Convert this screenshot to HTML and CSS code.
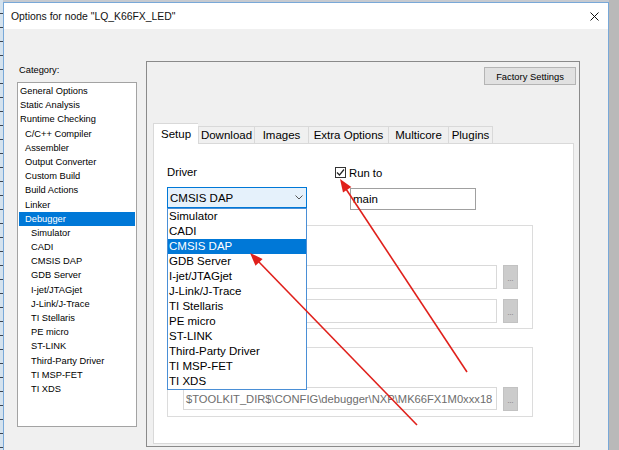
FILE: index.html
```html
<!DOCTYPE html>
<html>
<head>
<meta charset="utf-8">
<title>Options for node</title>
<link rel="stylesheet" href="styles.css">
</head>
<body>
<div class="screen">
  <div class="bgstrip"></div>
  <div class="window">
    <div class="titlebar">
      <span class="title">Options for node "LQ_K66FX_LED"</span>
      <svg class="close" width="9" height="9" viewBox="0 0 9 9"><path d="M0.5 0.5L8.5 8.5M8.5 0.5L0.5 8.5" stroke="#111" stroke-width="1"/></svg>
    </div>
    <div class="content">
      <div class="catcol">
        <div class="catlabel">Category:</div>
        <ul class="catlist">
          <li class="l1">General Options</li>
          <li class="l1">Static Analysis</li>
          <li class="l1">Runtime Checking</li>
          <li class="l2">C/C++ Compiler</li>
          <li class="l2">Assembler</li>
          <li class="l2">Output Converter</li>
          <li class="l2">Custom Build</li>
          <li class="l2">Build Actions</li>
          <li class="l2">Linker</li>
          <li class="l2 sel">Debugger</li>
          <li class="l3">Simulator</li>
          <li class="l3">CADI</li>
          <li class="l3">CMSIS DAP</li>
          <li class="l3">GDB Server</li>
          <li class="l3">I-jet/JTAGjet</li>
          <li class="l3">J-Link/J-Trace</li>
          <li class="l3">TI Stellaris</li>
          <li class="l3">PE micro</li>
          <li class="l3">ST-LINK</li>
          <li class="l3">Third-Party Driver</li>
          <li class="l3">TI MSP-FET</li>
          <li class="l3">TI XDS</li>
        </ul>
      </div>
      <div class="panel">
        <div class="factory">Factory Settings</div>
        <div class="tabs">
          <div class="tab active t-setup">Setup</div>
          <div class="tab t-download">Download</div>
          <div class="tab t-images">Images</div>
          <div class="tab t-extra">Extra Options</div>
          <div class="tab t-multi">Multicore</div>
          <div class="tab t-plugins">Plugins</div>
        </div>
        <div class="tabbody">
          <div class="toprow">
            <div class="drivercol">
              <div class="lbl">Driver</div>
              <div class="combo">
                <span>CMSIS DAP</span>
                <svg width="8" height="5" viewBox="0 0 8 5"><path d="M0.5 0.5L4 4L7.5 0.5" fill="none" stroke="#555" stroke-width="1"/></svg>
              </div>
            </div>
            <div class="runcol">
              <div class="chkrow">
                <span class="chk"><svg width="9" height="9" viewBox="0 0 9 9"><path d="M1 4.5L3.5 7L8 1.5" fill="none" stroke="#222" stroke-width="1.2"/></svg></span>
                <span class="lbl">Run to</span>
              </div>
              <div class="mainbox">main</div>
            </div>
          </div>
          <div class="group g1">
            <div class="frow"><div class="path"></div><div class="browse">...</div></div>
            <div class="frow"><div class="path"></div><div class="browse">...</div></div>
          </div>
          <div class="group g2">
            <div class="frow"><div class="path short">$TOOLKIT_DIR$\CONFIG\debugger\NXP\MK66FX1M0xxx18</div><div class="browse">...</div></div>
          </div>
          <ul class="dropdown">
            <li>Simulator</li>
            <li>CADI</li>
            <li class="sel">CMSIS DAP</li>
            <li>GDB Server</li>
            <li>I-jet/JTAGjet</li>
            <li>J-Link/J-Trace</li>
            <li>TI Stellaris</li>
            <li>PE micro</li>
            <li>ST-LINK</li>
            <li>Third-Party Driver</li>
            <li>TI MSP-FET</li>
            <li>TI XDS</li>
          </ul>
        </div>
      </div>
    </div>
  </div>
  <div class="rightstrip"></div>
</div>
<svg class="arrows" width="619" height="450" viewBox="0 0 619 450">
  <line x1="467" y1="372" x2="346" y2="189" stroke="#e0201b" stroke-width="1.6"/>
  <polygon points="340,179 351.3,187.1 343,192.6" fill="#e0201b"/>
  <line x1="417" y1="425" x2="258" y2="261" stroke="#e0201b" stroke-width="1.6"/>
  <polygon points="250,253 262.6,258.9 255.5,265.8" fill="#e0201b"/>
</svg>
</body>
</html>
```
FILE: styles.css
```css
* { box-sizing: border-box; margin: 0; padding: 0; }
html, body { width: 619px; height: 450px; overflow: hidden; }
body {
  position: relative;
  background: #c6cad0;
  font-family: "Liberation Sans", Arial, sans-serif;
  color: #000;
}
.screen { display: flex; height: 450px; }
.bgstrip {
  width: 3px;
  background: repeating-linear-gradient(to bottom, #d4e2ee 0 13px, #3a4450 13px 14px);
}
.window {
  width: 606px;
  margin-top: 2px;
  border: 1px solid #78a8d8;
  border-bottom: none;
  background: #f0f0f0;
  display: flex;
  flex-direction: column;
}
.rightstrip { width: 10px; background: #b9b9b9; }

.titlebar {
  height: 26px;
  background: #fff;
  display: flex;
  align-items: center;
  justify-content: space-between;
  padding: 0 9px 0 7px;
}
.title { font-size: 10.4px; color: #111; }

.content { flex: 1; display: flex; padding: 32px 0 0 13px; }
.catcol { width: 120px; }
.catlabel { font-size: 9.3px; line-height: 12px; margin-top: 3px; padding-left: 2px; }
.catlist {
  list-style: none;
  width: 120px;
  height: 345px;
  margin-top: 6px;
  border: 1px solid #a3a3a3;
  background: #fff;
  padding: 1px 1px 0;
}
.catlist li { height: 14.2px; line-height: 14.2px; font-size: 9.3px; white-space: nowrap; }
.catlist .l1 { padding-left: 1px; }
.catlist .l2 { padding-left: 6px; }
.catlist .l3 { padding-left: 12px; }
.catlist .sel { background: #0078d7; color: #fff; }

.panel {
  width: 434px;
  height: 386px;
  margin-left: 9px;
  border: 1px solid #8a8a8a;
  display: flex;
  flex-direction: column;
}
.factory {
  align-self: flex-end;
  margin: 5px 3px 0 0;
  width: 92px;
  height: 18px;
  background: #e1e1e1;
  border: 1px solid #b4b4b4;
  font-size: 9.4px;
  display: flex;
  align-items: center;
  justify-content: center;
}
.tabs {
  display: flex;
  align-items: flex-end;
  height: 20px;
  margin: 38px 0 0 6px;
  position: relative;
  z-index: 1;
}
.tab {
  height: 17px;
  border: 1px solid #d9d9d9;
  border-bottom: none;
  border-right: none;
  background: #f0f0f0;
  font-size: 11.5px;
  display: flex;
  align-items: center;
  justify-content: center;
  white-space: nowrap;
}
.tab:last-child { border-right: 1px solid #d9d9d9; }
.tab.active { height: 21px; margin-bottom: -1px; background: #fff; }
.t-setup { width: 45px; }
.t-download { width: 56px; }
.t-images { width: 54px; }
.t-extra { width: 80px; }
.t-multi { width: 60px; }
.t-plugins { width: 45px; }

.tabbody {
  position: relative;
  margin: 0 5px 0 6px;
  height: 301px;
  background: #fff;
  border: 1px solid #d9d9d9;
  padding: 21px 0 0 13px;
}
.toprow { display: flex; height: 60px; }
.drivercol { width: 140px; }
.lbl { font-size: 11.3px; line-height: 14px; }
.combo {
  margin-top: 8px;
  height: 21px;
  border: 1px solid #0078d7;
  background: #e5f1fb;
  display: flex;
  align-items: center;
  justify-content: space-between;
  padding: 0 3px 0 2px;
  font-size: 11.5px;
}
.runcol { margin-left: 28px; padding-top: 2px; }
.chkrow { display: flex; align-items: center; height: 11px; }
.chk {
  width: 11px;
  height: 11px;
  border: 1px solid #333;
  background: #fff;
  margin-right: 3px;
  display: flex;
  align-items: center;
  justify-content: center;
}
.mainbox {
  margin: 10px 0 0 15px;
  width: 126px;
  height: 22px;
  border: 1px solid #a0a0a0;
  padding-left: 2px;
  font-size: 11.5px;
  display: flex;
  align-items: center;
}
.group { width: 366px; border: 1px solid #dcdcdc; padding: 39px 0 0 15px; }
.g1 { height: 104px; }
.g2 { margin-top: 18px; height: 70px; }
.frow { display: flex; }
.frow + .frow { margin-top: 10px; }
.path {
  width: 314px;
  height: 24px;
  border: 1px solid #d9d9d9;
  background: #fff;
  font-size: 11.2px;
  color: #6d6d6d;
  padding-left: 2px;
  display: flex;
  align-items: center;
  white-space: nowrap;
}
.path.short { height: 23px; }
.browse {
  width: 15px;
  height: 24px;
  margin-left: 6px;
  background: #cccccc;
  border: 1px solid #c2c2c2;
  font-size: 7px;
  color: #666;
  display: flex;
  align-items: center;
  justify-content: center;
  padding-top: 3px;
}
.dropdown {
  position: absolute;
  left: 13px;
  top: 64px;
  width: 140px;
  list-style: none;
  background: #fff;
  border: 1px solid #4a8fd6;
}
.dropdown li { height: 15px; line-height: 15px; font-size: 11.5px; padding-left: 1px; white-space: nowrap; }
.dropdown .sel { background: #0078d7; color: #fff; }

.arrows { position: absolute; left: 0; top: 0; pointer-events: none; }
```
